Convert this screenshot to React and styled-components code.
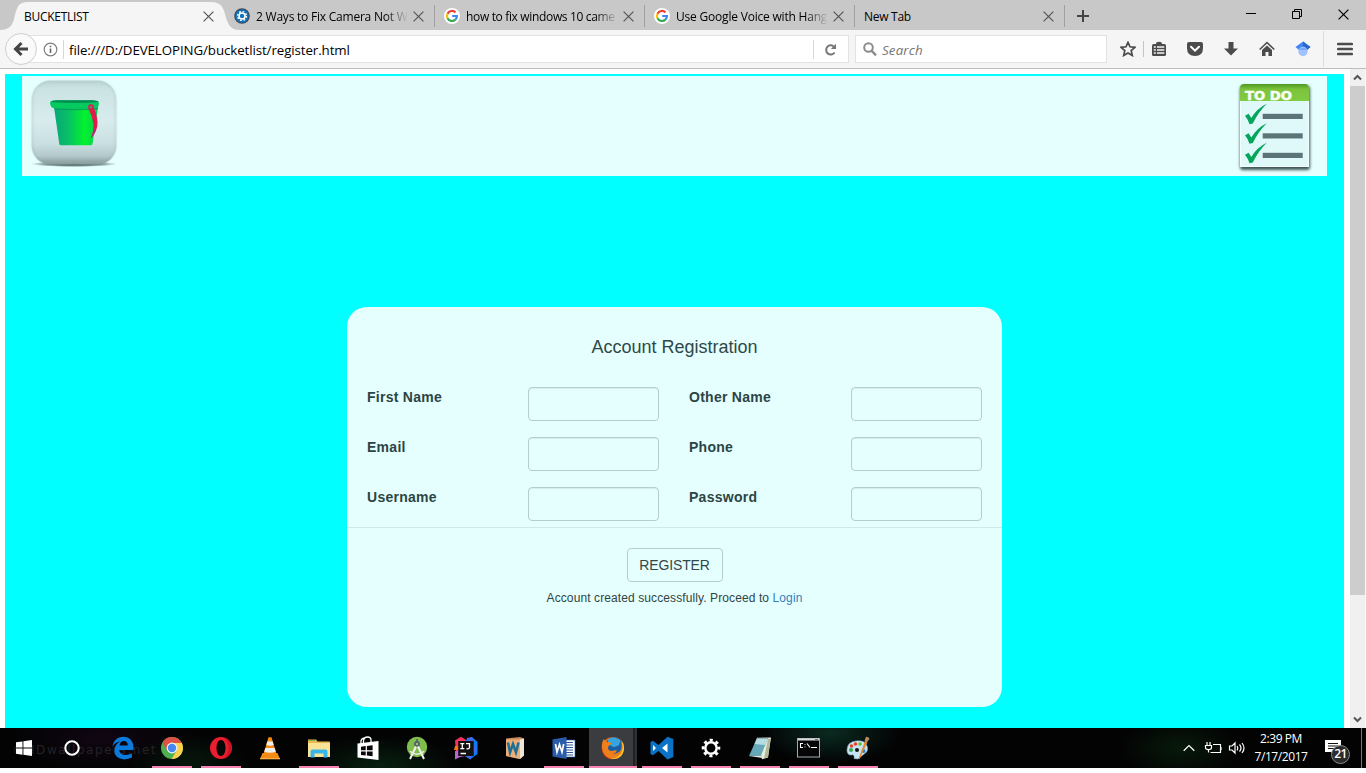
import React from 'react';
import styled, { createGlobalStyle } from 'styled-components';

const Global = createGlobalStyle`
  * { box-sizing: border-box; }
  html, body { margin: 0; padding: 0; background: #fff; overflow: hidden; }
  svg { display: block; flex: none; }
`;

const ui = `"Segoe UI", "Open Sans", "Noto Sans", sans-serif`;
const body = `"Liberation Sans", Arial, sans-serif`;

const Screen = styled.div`
  width: 1366px;
  height: 773px;
  display: flex;
  flex-direction: column;
  background: #fff;
  overflow: hidden;
`;

/* ---------- browser tabs ---------- */
const TabStrip = styled.div`
  flex: none;
  height: 30px;
  background: #c8c8c8;
  display: flex;
  font: 12px/17px ${ui};
  color: #000;
`;
const ActiveTab = styled.div`
  position: relative;
  width: 225px;
  height: 30px;
  padding: 2px 11px 0 24px;
  display: flex;
  align-items: center;
`;
const TabShape = styled.svg`
  position: absolute;
  left: 0;
  top: 0;
`;
const Tab = styled.div`
  width: 210px;
  height: 30px;
  padding: 2px 11px 0 9px;
  display: flex;
  align-items: center;
  background: linear-gradient(#a0a0a0, #a0a0a0) 100% 5px / 1px 22px no-repeat;
`;
const Favicon = styled.div`
  width: 16px;
  margin-right: 6px;
`;
const TabTitle = styled.div`
  position: relative;
  flex: 1;
  min-width: 0;
  height: 17px;
  margin-right: 4px;
  white-space: nowrap;
  letter-spacing: ${p => p.$track || 0}px;
  mask-image: ${p => (p.$fade ? 'linear-gradient(90deg, #000 calc(100% - 24px), transparent calc(100% - 1px))' : 'none')};
`;
const TabClose = styled.div`
  position: relative;
`;
const NewTabButton = styled.div`
  padding: 10px 0 0 12px;
  flex: 1;
`;
const WindowButtons = styled.div`
  display: flex;
  gap: 36px;
  padding: 9px 17px 0 0;
`;

/* ---------- navigation bar ---------- */
const NavBar = styled.div`
  flex: none;
  height: 39px;
  background: #f5f5f5;
  border-bottom: 1px solid #bdbdbd;
  display: flex;
  align-items: center;
  padding-left: 5px;
`;
const BackButton = styled.div`
  position: relative;
  z-index: 1;
  width: 32px;
  height: 32px;
  border-radius: 50%;
  border: 1px solid #cfcfcf;
  background: #fafafa;
  display: flex;
  align-items: center;
  justify-content: center;
`;
const Field = styled.div`
  height: 28px;
  border: 1px solid #e2e2e2;
  background: #fff;
  display: flex;
  align-items: center;
`;
const UrlField = styled(Field)`
  width: 822px;
  margin-left: -10px;
  padding-left: 15px;
`;
const UrlText = styled.div`
  flex: 1;
  padding-left: 5px;
  font: 13.33px/18px ${ui};
  letter-spacing: -0.1px;
  color: #000;
  padding-top: 1px;
`;
const Rule = styled.div`
  width: 1px;
  height: ${p => p.$h || 19}px;
  background: ${p => p.$c || '#d8d8d8'};
`;
const IdentityRule = styled(Rule)`
  margin-left: 5px;
`;
const ReloadButton = styled.div`
  width: 34px;
  padding-right: 2px;
  display: flex;
  justify-content: center;
`;
const SearchField = styled(Field)`
  width: 252px;
  margin-left: 6px;
  padding: 1px 0 0 7px;
  gap: 5px;
  font: italic 13.33px/18px ${ui};
  letter-spacing: 0.15px;
  color: #757575;
`;
const Tools = styled.div`
  flex: 1;
  height: 38px;
  display: flex;
  align-items: center;
  padding-left: 13px;
`;
const Tool = styled.div`
  width: 16px;
  margin-left: ${p => p.$before || 0}px;
  margin-right: ${p => p.$gap || 0}px;
`;

/* ---------- page ---------- */
const Viewport = styled.div`
  flex: none;
  height: 659px;
  display: flex;
  padding-left: 5px;
  overflow: hidden;
`;
const Page = styled.div`
  width: 1339px;
  margin-top: 5px;
  padding: 2px 17px 0;
  background: #00ffff;
  font-family: ${body};
  color: #2f4f4f;
`;
const Banner = styled.div`
  height: 100px;
  background: #e5ffff;
  display: flex;
  justify-content: space-between;
`;
const Card = styled.form`
  width: 655px;
  height: 400px;
  margin: 131px auto 0;
  border-radius: 20px;
  background: #e5ffff;
  display: flex;
  flex-direction: column;
  align-items: center;
`;
const Title = styled.h4`
  margin: 30px 0 0;
  font: 18px/20px ${body};
  color: #2f4848;
`;
const Fields = styled.div`
  width: 100%;
  height: 171px;
  padding: 30px 20px 0;
  display: grid;
  grid-template-columns: 161px 131px 192px 131px;
  grid-auto-rows: 50px;
  border-bottom: 1px solid #cfe8e8;
`;
const Label = styled.label`
  font: bold 14px/20px ${body};
  letter-spacing: 0.27px;
  color: #2c4444;
  padding-left: ${p => (p.$inset ? 30 : 0)}px;
`;
const Input = styled.input`
  width: 131px;
  height: 34px;
  border: 1px solid #b5cdcf;
  border-radius: 4px;
  background: transparent;
  box-shadow: inset 0 1px 1px rgba(0, 0, 0, 0.075);
`;
const RegisterButton = styled.button`
  width: 96px;
  height: 34px;
  margin-top: 20px;
  padding: 0;
  border: 1px solid #b5cdcf;
  border-radius: 4px;
  background: transparent;
  font: 14px/20px ${body};
  letter-spacing: -0.12px;
  color: #334747;
`;
const Notice = styled.p`
  margin: 8px 0 0;
  font: 12px/17px ${body};
  letter-spacing: 0.1px;
  color: #2f4444;
`;
const Link = styled.a`
  color: #337fbb;
`;
const Scrollbar = styled.div`
  width: 16px;
  margin-left: 6px;
  background: #f0f0f0;
  display: flex;
  flex-direction: column;
  justify-content: space-between;
  border-right: 1px solid #fafafa;
`;
const ScrollArrow = styled.div`
  height: 17px;
  display: flex;
  align-items: center;
  justify-content: center;
`;
const Thumb = styled.div`
  height: 509px;
  margin-bottom: 116px;
  background: #cdcdcd;
`;

/* ---------- taskbar ---------- */
const Taskbar = styled.div`
  position: relative;
  flex: none;
  height: 40px;
  display: flex;
  background:
    radial-gradient(ellipse 80px 30px at 380px 38px, #07200f, transparent),
    radial-gradient(ellipse 70px 30px at 830px 5px, #0a2a20, transparent),
    radial-gradient(ellipse 60px 30px at 190px 35px, #06170b, transparent),
    radial-gradient(ellipse 90px 30px at 100px 10px, #100612, transparent),
    radial-gradient(ellipse 60px 30px at 1180px 20px, #071a0a, transparent),
    #030304;
  font-family: ${ui};
`;
const Watermark = styled.div`
  position: absolute;
  left: 12px;
  top: 13px;
  font: 12px/18px "DejaVu Sans", sans-serif;
  letter-spacing: 1.55px;
  color: #242224;
`;
const SystemButton = styled.div`
  position: relative;
  width: 48px;
  display: flex;
  align-items: center;
  justify-content: center;
`;
const Apps = styled.div`
  position: relative;
  flex: 1;
  display: flex;
  gap: 9px;
  padding-left: 7px;
`;
const AppButton = styled.div`
  width: ${p => (p.$active ? 48 : 40)}px;
  height: 40px;
  margin: ${p => (p.$active ? '0 -4px 0 -4px' : 0)};
  padding-top: 2px;
  display: flex;
  align-items: center;
  justify-content: center;
  border-bottom: 2px solid ${p => (p.$open ? '#f783b3' : 'transparent')};
  background: ${p => (p.$active ? 'linear-gradient(90deg, #3b3c3f 44px, #202123 44px, #202123 46px, #303134 46px)' : 'transparent')};
  background-clip: padding-box;
`;
const Tray = styled.div`
  display: flex;
  align-items: center;
  padding-right: 4px;
`;
const Clock = styled.div`
  width: 54px;
  margin: 0 17px 0 9px;
  text-align: center;
  white-space: nowrap;
  font-size: 12px;
  line-height: 18px;
  letter-spacing: -0.42px;
  color: #fff;
  padding-bottom: 1px;
`;
const Notifications = styled.div`
  position: relative;
  width: 26px;
  height: 40px;
  margin-right: 10px;
  padding-top: 12px;
`;
const Badge = styled.div`
  position: absolute;
  left: 6px;
  top: 17px;
  width: 19px;
  height: 19px;
  border-radius: 50%;
  border: 1px solid #8b8b8b;
  background: #2b2b2e;
  color: #fff;
  font: 600 12px/16px ${ui};
  text-align: center;
  letter-spacing: -0.5px;
`;

const CloseX = ({ color = '#555' }) => (
  <svg width="11" height="11" viewBox="0 0 11 11"><path d="M.6.6 10.4 10.4M10.4.6.6 10.4" stroke={color} strokeWidth="1.2" /></svg>
);

const Google = () => (
  <svg width="16" height="16" viewBox="0 0 16 16">
    <circle cx="8" cy="8" r="8" fill="#fff" />
    <g fill="none" strokeWidth="2.2">
      <path d="M11.5 4.4A5 5 0 0 0 3.5 5.7" stroke="#ea4335" />
      <path d="M3.5 5.7a5 5 0 0 0 0 4.6" stroke="#fbbc05" />
      <path d="M3.5 10.3a5 5 0 0 0 7.9 1.3" stroke="#34a853" />
      <path d="M11.4 11.6A4.6 4.6 0 0 0 12.9 8H8.2" stroke="#4285f4" />
    </g>
  </svg>
);

const Gear = () => (
  <svg width="16" height="16" viewBox="0 0 16 16">
    <circle cx="8" cy="8" r="7.8" fill="#3b4b5c" />
    <circle cx="8" cy="8" r="6.6" fill="#1273be" />
    <circle cx="8" cy="8" r="4.4" fill="none" stroke="#fff" strokeWidth="1.4" strokeDasharray="1.73 1.73" />
    <circle cx="8" cy="8" r="3" fill="none" stroke="#fff" strokeWidth="1.6" />
  </svg>
);

const Bucket = () => (
  <svg width="110" height="100" viewBox="0 0 110 100">
    <defs>
      <linearGradient id="tile" x1="0" y1="0" x2="0" y2="1">
        <stop offset="0" stopColor="#bcd5d5" /><stop offset=".1" stopColor="#cbe3e4" />
        <stop offset=".48" stopColor="#d8ecee" /><stop offset=".75" stopColor="#c9dfe1" />
        <stop offset=".9" stopColor="#b2c8ca" /><stop offset="1" stopColor="#819496" />
      </linearGradient>
      <linearGradient id="pail" x1="0" y1="0" x2="1" y2="0">
        <stop offset="0" stopColor="#07a878" /><stop offset=".3" stopColor="#08bd68" />
        <stop offset=".7" stopColor="#02f32e" /><stop offset="1" stopColor="#06cb55" />
      </linearGradient>
      <radialGradient id="floor"><stop offset="0" stopColor="#284044" /><stop offset=".6" stopColor="#6c8688" /><stop offset="1" stopColor="#e5ffff" /></radialGradient>
      <filter id="soft" x="-10%" y="-10%" width="120%" height="120%"><feGaussianBlur stdDeviation=".9" /></filter>
    </defs>
    <ellipse cx="52" cy="88" rx="43" ry="3" fill="url(#floor)" />
    <rect x="9.5" y="4.500" width="85" height="84" rx="19" fill="url(#tile)" />
    <rect x="10.500" y="5.500" width="83" height="82" rx="18" fill="none" stroke="#a0b9bc" strokeWidth="1.500" opacity=".4" filter="url(#soft)" />
    <path d="M32 31h44l-5.500 37q-.3 1.200-1.700 1.200H39q-1.500 0-1.700-1.200z" fill="url(#pail)" />
    <path d="M32 31h44l-.3 2.500q-22 1.500-43.200 0z" fill="#078a5a" opacity=".65" />
    <path d="M28 27q0-2.500 6-2.700h36q6.500 0 7 2.700-.2 5-3 5.300-22 1.400-42 0-3.500-.3-4-5.300z" fill="#06c960" />
    <path d="M29 26q1-1.700 6-1.700h35q5.500 0 6.500 1.700-22 2-47.500 0z" fill="#038e50" />
    <path d="M66.500 33 71.500 31Q76.500 42 75.300 50 73.800 58 68.500 62.500 72 55 71.500 48 70.500 40 66.500 33z" fill="#e21b4e" />
    <path d="M72 54h2q-1.500 5-5.500 8.500 2.500-4 3.500-8.500z" fill="#b02a90" />
    <circle cx="69" cy="31.200" r="2" fill="#3ca870" stroke="#e21b4e" strokeWidth="1.700" />
  </svg>
);

const Tick = ({ y }) => (
  <g transform={`translate(0 ${y})`}>
    <path d="M10 11.800l3.600-2.100 2.700 4.300Q22 4.300 31.700-.3 23 8.500 17.800 19.500l-3.300.8Q13 15.500 10 11.800z" fill="#05a65c" />
    <rect x="27.700" y="9.800" width="40" height="5.200" fill="#5b7478" />
  </g>
);

const ToDo = () => (
  <svg width="92" height="100" viewBox="0 0 92 100">
    <defs>
      <filter id="drop" x="-15%" y="-15%" width="130%" height="130%"><feGaussianBlur stdDeviation="1.800" /></filter>
      <linearGradient id="lime" x1="0" y1="0" x2="0" y2="1"><stop offset="0" stopColor="#4f9822" /><stop offset=".3" stopColor="#7bc33c" /><stop offset="1" stopColor="#80cc42" /></linearGradient>
    </defs>
    <rect x="5" y="10" width="70" height="84" rx="3" fill="#3d5557" filter="url(#drop)" />
    <path d="M5 11q0-3 3-3h63q3 0 3 3v80H5z" fill="#dff8fa" />
    <path d="M5.500 24V90.500h68V24" fill="none" stroke="#f4ffff" strokeWidth="1" />
    <path d="M5 25V12q0-4 4-4h61q4 0 4 4v13z" fill="url(#lime)" />
    <text x="10" y="24" fill="#f8fff8" stroke="#f8fff8" strokeWidth=".5" fontFamily='"DejaVu Sans", sans-serif' fontWeight="700" fontSize="12" textLength="47" lengthAdjust="spacingAndGlyphs">TO DO</text>
    <Tick y={28} /><Tick y={47.500} /><Tick y={67} />
  </svg>
);

const icon = (children, size = 24) => <svg width={size} height={size} viewBox="0 0 24 24">{children}</svg>;

const edge = icon(<path d="M1.500 10.700C2.300 4.500 6.700.8 12.300.8c6.400 0 10.200 4.700 10.200 10.600v2.500H8.300c.2 3.600 3.100 5 6.400 5 2.300 0 4.400-.6 6.200-1.600v4.300a17 17 0 0 1-7.600 1.800C7 23.400 3.400 19.500 3.400 14.600c0-4 2.200-7.200 5.800-9-3.300.3-6 2.200-7.700 5.100zm7-1.200h8.300c0-3-1.400-4.500-3.900-4.500s-4 1.700-4.400 4.500z" fill="#0a7bdc" />);
const chrome = icon(<>
  <circle cx="12" cy="12" r="11" fill="#4caf50" />
  <path d="M12 7h9.800a11 11 0 0 1-10.300 16L17 14z" fill="#fcd04b" />
  <path d="M2.500 6.500A11 11 0 0 1 21.800 7H12l-5 7.500z" fill="#de5245" />
  <circle cx="12" cy="12" r="5.400" fill="#f3f6f6" /><circle cx="12" cy="12" r="4.200" fill="#4688f1" />
</>);
const opera = icon(<><path fillRule="evenodd" d="M12 1a11 11 0 1 0 0 22 11 11 0 0 0 0-22zm0 3c2.700 0 4.500 3.300 4.500 8s-1.800 8-4.500 8-4.500-3.300-4.500-8S9.300 4 12 4z" fill="#ed1c2e" /><path d="M14 1.200q8 1.800 9 10.800-1 9-9 10.800 5.500-4 5.500-10.800T14 1.200z" fill="#b7101f" opacity=".65" /></>);
const vlc = icon(<>
  <path d="M4.500 17h15l2.500 6H2z" fill="#f28a16" /><path d="M2 22h20v1.300H2z" fill="#fbb03b" />
  <path d="M10.500 1.200h3L18.500 18q-6.500 3-13 0z" fill="#f68b15" />
  <path d="M9.300 5.500h5.400l1 3.400q-3.700 1.500-7.400 0zM7.300 12h9.400l1.100 3.700q-5.800 2.300-11.600 0z" fill="#eceef0" />
</>);
const explorer = icon(<>
  <path d="M1 3.500h8l1.500 2H22q1 0 1 1V21H1z" fill="#e9b94a" /><path d="M1 7h22v14H1z" fill="#fbe395" /><path d="M2 4.500h6" stroke="#70b95b" />
  <path d="M3.500 21.500v-6q0-2 2-2h13q2 0 2 2v6h-4v-4h-9v4z" fill="#38b6e8" />
</>);
const store = icon(<>
  <path d="M7.500 8V4.500Q8 1 11.500 1T15 4v2.500M5 8.500V4.500Q6 2 9 2" fill="none" stroke="#fff" strokeWidth="1.300" />
  <path d="M1.500 7.500 22.500 5v19L1.500 21.500z" fill="#fff" /><path d="M5 10.700l4.700-.6v4.200H5zm5.900-.8 5.700-.7v5.100h-5.700zM5 15.400h4.700v4.100L5 19zm5.900 0h5.700v4.900l-5.700-.7z" fill="#080808" />
</>);
const studio = icon(<>
  <circle cx="12" cy="11" r="10.200" fill="#81bd4b" /><circle cx="12" cy="8" r="3" fill="#58636a" /><circle cx="12" cy="8" r="1.100" fill="#a9dc75" />
  <path d="M11 10.500 5 23M13 10.500 19 23" stroke="#f1f1f1" strokeWidth="2" /><path d="M5 15.200q7 6 14 0" fill="none" stroke="#eee" strokeWidth="1.500" /><path d="M12 3v3" stroke="#58636a" strokeWidth="1.700" />
</>);
const idea = icon(<>
  <path d="M1 4.500 7 .8 12 4 8 19 2 15z" fill="#fe315d" /><path d="M12 4 18 1l5.500 5v12L16 23.500 11 20z" fill="#087cfa" /><path d="M13 2 18 1l4 14-6 8-5-3z" fill="#4a68e8" />
  <path d="M1 15h6l4 5-5 1-5 2.500z" fill="#b965d6" /><path d="M1 10h5l-2 4H0z" fill="#f97a12" />
  <rect x="4.200" y="5" width="15.500" height="15" fill="#111" />
  <path d="M6.300 7.700h4M8.300 7.700v5M6.300 12.700h4M12 7.700h3.500v4q-.4 1.600-3 1M6.500 17.500h5.500" fill="none" stroke="#fff" strokeWidth="1.300" />
</>);
const book = icon(<>
  <path d="M3 2.500 17 1l4 1.500v17L17 23 3 20z" fill="#c58b5c" /><path d="M17 3.500 21 2.500v17L17 23z" fill="#efe5d9" /><path d="M3 3.500h14V23L3 20z" fill="#edae78" />
  <path d="M5 6.500 7 16.500 10 8l3 8.500 2.500-10" fill="none" stroke="#1e6f96" strokeWidth="2.500" />
</>);
const word = icon(<>
  <path d="M13 4h10v17H13z" fill="#fff" stroke="#2b579a" strokeWidth=".6" /><path d="M14 6.500h7M14 9h7M14 11.500h7M14 14h7M14 16.500h7M14 19h7" stroke="#2b579a" strokeWidth="1.100" />
  <path d="M.5 3.500 14.500 1v22L.5 20.500z" fill="#2b5caa" /><path d="M3.500 8 5 16l2.500-7.500L10 16l1.700-8" fill="none" stroke="#fff" strokeWidth="1.700" />
</>);
const firefox = icon(<>
  <circle cx="12" cy="12" r="11" fill="#ee6d18" />
  <circle cx="13" cy="9.500" r="8.300" fill="#1a5fa3" />
  <path d="M7 3.500q6-4.500 12.500.8l-1.500 5-5 2-6-3z" fill="#35a4df" />
  <path d="M1.200 6.500 2.800 3l3.500 3.200q2-.5 4.200.8-.6 2-3.200 3.200-.6 2 .2 3.500 2.500 2 5.500.8 2-.6 3 .2-1.500 3-4.500 3.300 5 1 8-3 2-3.500.5-9Q24 11 22 16.500T11 23.300Q2 22 .9 13q-.3-3.500.3-6.500z" fill="#ef7f1a" />
  <path d="M20.200 4q3 8 0 13t-9.700 5.800q11 1.500 12.500-9.800Q23.200 7.500 20.200 4z" fill="#fdc92b" />
  <path d="M1 12q1 8 9 11.300Q.9 22 1 12z" fill="#c52a1b" />
</>);
const vs = icon(<><path d="M17.500.7 23.300 3v18l-5.800 2.400-9-8.400-5.600 4.300L.5 18V6l2.400-1.300L8.500 9z" fill="#0b72c5" /><path d="M17.500 7.500 12 12l5.500 4.500zM3 9v6l3-3z" fill="#fff" /></>);
const settings = icon(<>
  <circle cx="12" cy="12" r="8" fill="none" stroke="#fff" strokeWidth="2.600" strokeDasharray="3.140 3.140" strokeDashoffset="1.570" /><circle cx="12" cy="12" r="5.700" fill="none" stroke="#fff" strokeWidth="2.500" />
</>);
const notepad = icon(<>
  <path d="M9 2 23 1.500 20 21.500l-6 1.700z" fill="#e8edda" /><path d="M20 3h2.500L20 21l-4 1.500z" fill="#aeb89b" /><path d="M9 2h11l-7 17.500L1 20z" fill="#65a8b9" /><path d="M9 2h11l-3 7-10.500-1z" fill="#b6dbe0" /><path d="M1 20 13 19.500 15 22z" fill="#e4f1f2" /><path d="M9 2h12" stroke="#717c80" strokeWidth="1.500" strokeDasharray="1 .7" />
</>);
const cmd = icon(<>
  <rect x=".5" y="2.500" width="22" height="18.500" fill="#050505" stroke="#a5a9ad" /><path d="M1 3.500h21" stroke="#d8dadd" strokeWidth="2" /><path d="M18 3.500h3" stroke="#77797c" strokeWidth="1" />
  <path d="M6 7.500H3.500v4H6M8 8v.8M8 10.500v.8M10 7.500l3 4M14 11.500h6" fill="none" stroke="#fff" strokeWidth="1.100" />
</>);
const paint = icon(<>
  <path d="M1 14Q1 6 10 5t11 5q2 5-3 8l-6 5-4-.5Q9 18 5 19q-4 0-4-5z" fill="#c8e4f2" stroke="#8cb5c9" strokeWidth=".6" />
  <circle cx="5" cy="14" r="2" fill="#39a84a" /><circle cx="5.500" cy="10" r="1.800" fill="#e0432e" /><circle cx="9.500" cy="8" r="1.800" fill="#e9402e" /><circle cx="14" cy="8" r="1.800" fill="#68b82f" /><circle cx="17.500" cy="15" r="2" fill="#3179d1" /><circle cx="11" cy="14" r="2" fill="#111" />
  <path d="M13 23 19.500 5l1.500 1z" fill="#e28b2c" stroke="#e28b2c" /><path d="M18.500 5 20 .8q3 0 3.500 2.200L21 6z" fill="#b88b62" />
</>);

const apps = [
  { i: edge }, { i: chrome, open: true }, { i: opera, open: true }, { i: vlc }, { i: explorer, open: true }, { i: store },
  { i: studio }, { i: idea }, { i: book }, { i: word, open: true }, { i: firefox, open: true, active: true }, { i: vs, open: true },
  { i: settings, open: true }, { i: notepad, open: true }, { i: cmd, open: true }, { i: paint, open: true },
];

const tabs = [
  { fav: <Gear />, title: '2 Ways to Fix Camera Not W', track: -0.22, fade: true },
  { fav: <Google />, title: 'how to fix windows 10 came', track: -0.34, fade: true },
  { fav: <Google />, title: 'Use Google Voice with Hang', track: -0.2, fade: true },
  { title: 'New Tab', track: -0.28 },
];

const rows = [['First Name', 'Other Name'], ['Email', 'Phone'], ['Username', 'Password']];

const toolIcon = children => <svg width="16" height="16" viewBox="0 0 16 16">{children}</svg>;
const ink = '#4c4c4c';

export default function App() {
  return (
    <Screen>
      <Global />
      <TabStrip>
        <ActiveTab>
          <TabShape width="242" height="30" viewBox="0 0 242 30">
            <path d="M0 30C9 30 12 26 14 19 17 7 18 2 28 2H211C221 2 223 7 225 14 228 26 231 30 240 30z" fill="#f5f5f5" />
          </TabShape>
          <TabTitle $track={-0.28}>BUCKETLIST</TabTitle>
          <TabClose><CloseX /></TabClose>
        </ActiveTab>
        {tabs.map(t => (
          <Tab key={t.title}>
            {t.fav && <Favicon>{t.fav}</Favicon>}
            <TabTitle $fade={t.fade} $track={t.track}>{t.title}</TabTitle>
            <CloseX />
          </Tab>
        ))}
        <NewTabButton><svg width="12" height="12" viewBox="0 0 12 12"><path d="M6 0v12M0 6h12" stroke="#444" strokeWidth="2" /></svg></NewTabButton>
        <WindowButtons>
          <svg width="10" height="11" viewBox="0 0 10 11"><path d="M0 4.500h10" stroke="#000" /></svg>
          <svg width="10" height="11" viewBox="0 0 10 11"><path d="M.5 2.500h7v7h-7zM2.500 2.500v-2h7v7h-2" fill="none" stroke="#000" /></svg>
          <CloseX color="#000" />
        </WindowButtons>
      </TabStrip>

      <NavBar>
        <BackButton><svg width="16" height="16" viewBox="0 0 16 16"><path d="M15 8H3M8.500 2 2.500 8l6 6" fill="none" stroke="#444" strokeWidth="3" /></svg></BackButton>
        <UrlField>
          <svg width="15" height="15" viewBox="0 0 15 15"><circle cx="7.500" cy="7.500" r="6.300" fill="#fff" stroke="#808080" strokeWidth="1.200" /><path d="M7.500 6.500v4.500M7.500 3.700v1.600" stroke="#666" strokeWidth="1.600" /></svg>
          <IdentityRule />
          <UrlText>file:///D:/DEVELOPING/bucketlist/register.html</UrlText>
          <Rule />
          <ReloadButton><svg width="13" height="13" viewBox="0 0 13 13"><path d="M10 3.700A4.600 4.600 0 1 0 10.600 9.500" fill="none" stroke="#777" strokeWidth="2" /><path d="M12 .8V6H6.800z" fill="#777" /></svg></ReloadButton>
        </UrlField>
        <SearchField>
          <svg width="14" height="15" viewBox="0 0 14 15"><circle cx="5.500" cy="5.500" r="4.300" fill="none" stroke="#8c8c8c" strokeWidth="2" /><path d="m8.500 8.700 4.500 4.600" stroke="#8c8c8c" strokeWidth="2.400" /></svg>
          Search
        </SearchField>
        <Tools>
          <Tool $gap={7}>{toolIcon(<path d="m8 1.300 2 4.500 4.900.5-3.700 3.300 1.100 4.900L8 12l-4.300 2.500 1.100-4.900L1.100 6.300 6 5.800z" fill="none" stroke={ink} strokeWidth="1.700" />)}</Tool>
          <Rule $h={16} $c="#c4c4c4" />
          <Tool $before={7} $gap={20}>{toolIcon(<><path d="M2.500 3h11q1.500 0 1.500 1.500v9q0 1.500-1.500 1.500h-11Q1 15 1 13.500v-9Q1 3 2.500 3z" fill={ink} /><path d="M5 3Q5 .8 8 .8T11 3z" fill={ink} /><path d="M2.800 6h2M2.800 9h2M2.800 12h2M6 6h7.300M6 9h7.300M6 12h7.300" stroke="#f5f5f5" strokeWidth="1.500" /></>)}</Tool>
          <Tool $gap={20}>{toolIcon(<><path d="M2 1h12q2 0 2 2v4Q16 15 8 15T0 7V3q0-2 2-2z" fill={ink} /><path d="m4 5.800 4 3.800 4-3.800" fill="none" stroke="#fff" strokeWidth="2" strokeLinecap="round" /></>)}</Tool>
          <Tool $gap={20}>{toolIcon(<path d="M5.500 1h5v6.500H15l-7 7-7-7h4.500z" fill={ink} />)}</Tool>
          <Tool $gap={20}>{toolIcon(<><path d="m.7 8.500 7.300-7 7.300 7" fill="none" stroke={ink} strokeWidth="1.600" /><path d="M8 4.400 13 9v6H9.500v-4h-3v4H3V9z" fill={ink} /></>)}</Tool>
          <Tool $gap={12}>{toolIcon(<><path d="M8 .5 15.500 6 12 9H4L.5 6z" fill="#4285f4" /><path d="M8 .5 15.500 6 12 9 8 5.500z" fill="#2b67ca" /><circle cx="8" cy="10.500" r="4.700" fill="#a0c3ff" /><path d="M3.600 9q4.400-4.500 8.800 0z" fill="#76a7fa" /></>)}</Tool>
          <Rule $h={36} $c="#dedede" />
          <Tool $before={13}><svg width="16" height="14" viewBox="0 0 16 14"><path d="M1.300 2h13.400M1.300 7h13.400M1.300 12h13.400" stroke={ink} strokeWidth="2.700" strokeLinecap="round" /></svg></Tool>
        </Tools>
      </NavBar>

      <Viewport>
        <Page>
          <Banner><Bucket /><ToDo /></Banner>
          <Card>
            <Title>Account Registration</Title>
            <Fields>
              {rows.map(([left, right]) => (
                <React.Fragment key={left}>
                  <Label>{left}</Label><Input />
                  <Label $inset>{right}</Label><Input />
                </React.Fragment>
              ))}
            </Fields>
            <RegisterButton type="button">REGISTER</RegisterButton>
            <Notice>Account created successfully. Proceed to <Link>Login</Link></Notice>
          </Card>
        </Page>
        <Scrollbar>
          <ScrollArrow><svg width="9" height="7" viewBox="0 0 9 7"><path d="m1 5.500 3.500-3.500L8 5.500" fill="none" stroke="#555" strokeWidth="2" /></svg></ScrollArrow>
          <Thumb />
          <ScrollArrow><svg width="9" height="7" viewBox="0 0 9 7"><path d="m1 1.500 3.500 3.500L8 1.500" fill="none" stroke="#555" strokeWidth="2" /></svg></ScrollArrow>
        </Scrollbar>
      </Viewport>

      <Taskbar>
        <Watermark>©HDwallpapers.net</Watermark>
        <SystemButton><svg width="16" height="16" viewBox="0 0 16 16"><path d="M0 2.300 6.500 1.400v6.200H0zM7.400 1.200 16 0v7.600H7.400zM0 8.500h6.500v6.200L0 13.800zM7.400 8.500H16V16l-8.600-1.200z" fill="#fff" /></svg></SystemButton>
        <SystemButton><svg width="16" height="16" viewBox="0 0 16 16"><circle cx="8" cy="8" r="6.700" fill="none" stroke="#fff" strokeWidth="2" /></svg></SystemButton>
        <Apps>
          {apps.map((a, n) => <AppButton key={n} $open={a.open} $active={a.active}>{a.i}</AppButton>)}
        </Apps>
        <Tray>
          <svg width="62" height="16" viewBox="0 0 62 16" fill="none" stroke="#fff" strokeWidth="1.200">
            <path d="m.7 10.700 5.300-5.200 5.300 5.200" />
            <path d="M24 2v3M27 2v3M22.500 5.500h6v2q0 2.200-3 2.200t-3-2.200zM25.500 9.500v3M30 4.500h7.500v8h-10M38 7v3" />
            <path d="M46.500 6h2.500l3-3v10l-3-3h-2.500zM54 6q1.500 2 0 4.500M56.500 4.500q3 3.500 0 7M59 3q4 5 0 10" />
          </svg>
          <Clock>2:39 PM<br />7/17/2017</Clock>
          <Notifications>
            <svg width="16" height="16" viewBox="0 0 16 16"><path d="M0 0h16v12h-7v3l-3-3H0z" fill="#fff" /><path d="M3 3.500h10M3 6h10M3 8.500h7" stroke="#111" /></svg>
            <Badge>21</Badge>
          </Notifications>
          <Rule $h={40} $c="#777" />
        </Tray>
      </Taskbar>
    </Screen>
  );
}
